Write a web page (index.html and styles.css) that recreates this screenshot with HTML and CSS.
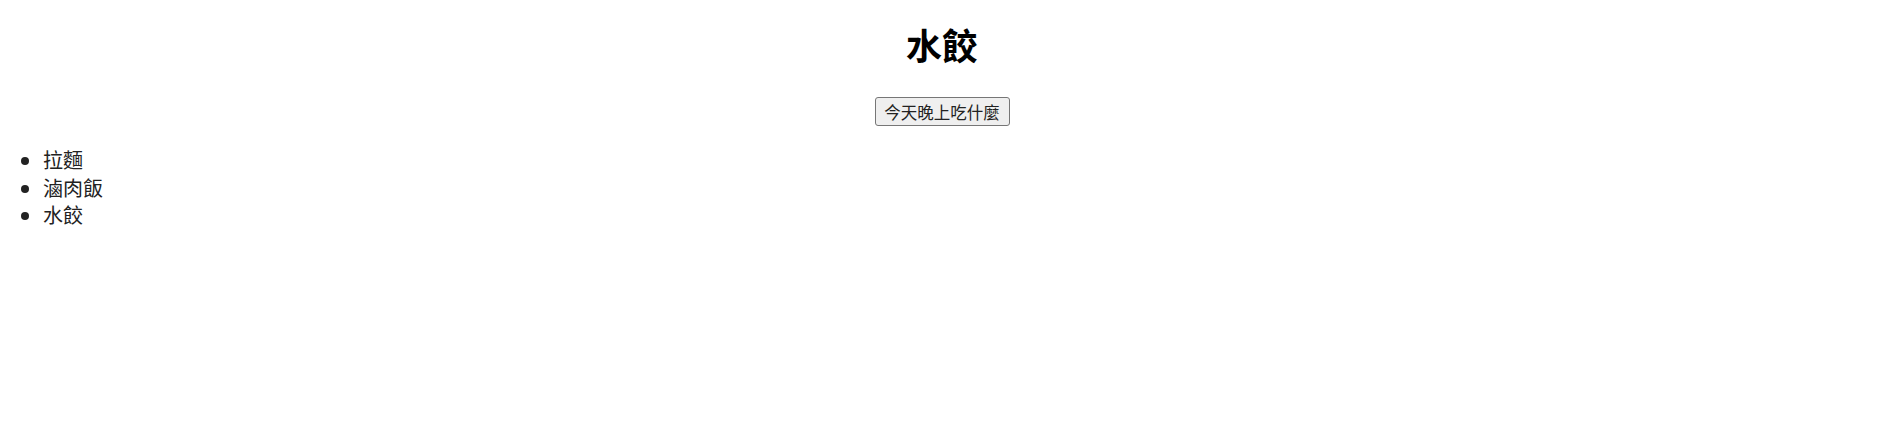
FILE: index.html
```html
<!DOCTYPE html>
<html lang="zh-Hant">
<head>
<meta charset="utf-8">
<title>今天晚上吃什麼</title>
<link rel="stylesheet" href="styles.css">
</head>
<body>
<div class="page">
  <h1 class="title">水餃</h1>
  <div class="actions">
    <button class="pick">今天晚上吃什麼</button>
  </div>
  <ul class="menu">
    <li>拉麵</li>
    <li>滷肉飯</li>
    <li>水餃</li>
  </ul>
</div>
</body>
</html>
```
FILE: styles.css
```css
html, body {
  margin: 0;
  padding: 0;
  background: #ffffff;
}
body {
  font-family: "Noto Sans CJK TC", "Noto Sans", sans-serif;
  color: #000;
}
.page {
  padding-right: 15px;
}
.title {
  margin: 22px 0 0;
  text-align: center;
  font-size: 36px;
  line-height: 44px;
  font-weight: 700;
}
.actions {
  margin-top: 31px;
  display: flex;
  justify-content: center;
}
.pick {
  font-family: "Noto Sans CJK TC", sans-serif;
  font-size: 16.5px;
  line-height: 20px;
  height: 29px;
  width: 135px;
  padding: 0;
  margin: 0;
  color: #222;
  background: #efefef;
  border: 1px solid #767676;
  border-radius: 3px;
}
.menu {
  margin: 20px 0 0;
  padding-left: 43px;
  font-size: 20px;
  line-height: 27.5px;
  color: #222;
}
```
